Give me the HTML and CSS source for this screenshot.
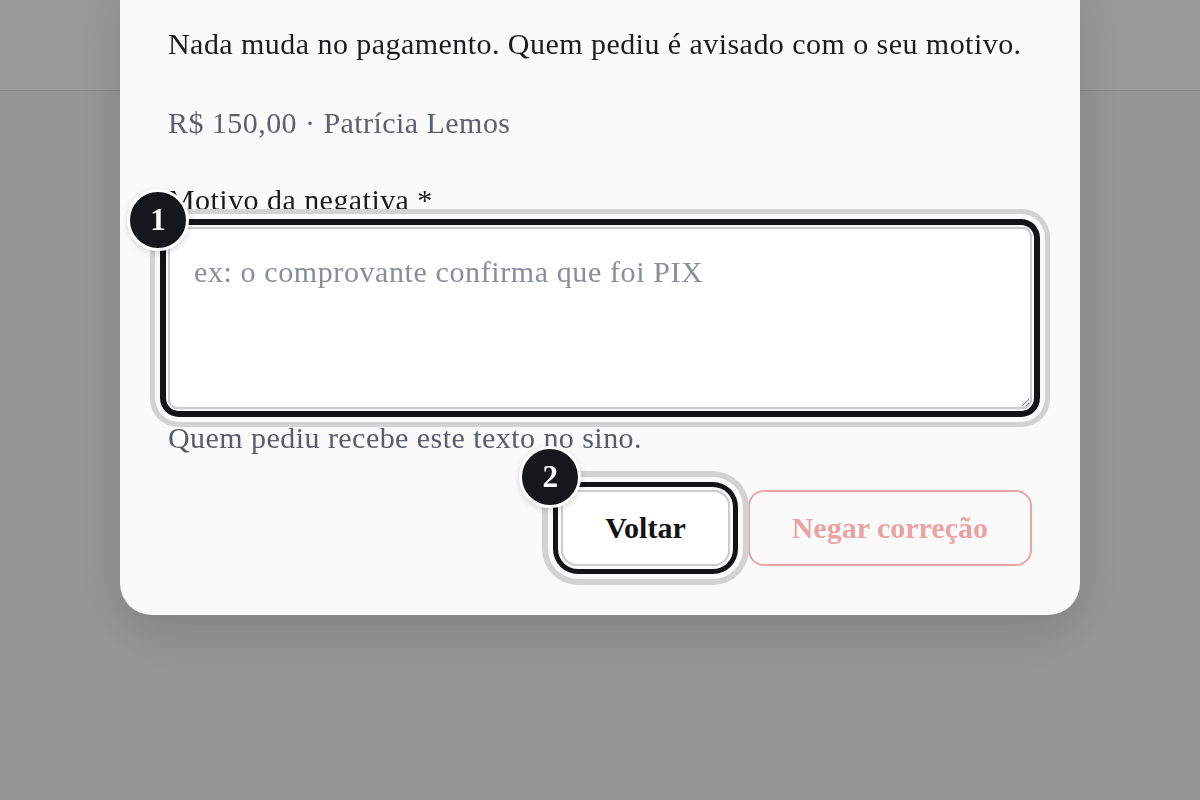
FILE: index.html
```html
<!DOCTYPE html>
<html lang="pt-BR">
<head>
<meta charset="utf-8">
<title>Negar correção</title>
<link rel="stylesheet" href="styles.css">
</head>
<body>
<header class="topbar"></header>
<main class="page"></main>
<div class="overlay">
  <section class="modal" role="dialog" aria-label="Negar correção">
    <p class="lead">Nada muda no pagamento. Quem pediu é avisado com o seu motivo.</p>
    <p class="meta">R$ 150,00 · Patrícia Lemos</p>
    <div class="field">
      <label class="label" for="motivo">Motivo da negativa *</label>
      <div class="hl hl-area">
        <textarea id="motivo" class="area" placeholder="ex: o comprovante confirma que foi PIX"></textarea>
        <span class="badge badge-1">1</span>
      </div>
      <p class="hint">Quem pediu recebe este texto no sino.</p>
    </div>
    <div class="actions">
      <div class="hl hl-btn">
        <button class="btn btn-back">Voltar</button>
        <span class="badge badge-2">2</span>
      </div>
      <button class="btn btn-deny" disabled>Negar correção</button>
    </div>
  </section>
</div>
</body>
</html>
```
FILE: styles.css
```css
* { box-sizing: border-box; }
html, body { margin: 0; height: 100%; }
body {
  font-family: "Liberation Serif", "DejaVu Serif", serif;
  background: #fafafa;
  overflow: hidden;
}
.topbar {
  height: 91px;
  background: #ffffff;
  border-bottom: 1px solid #e6e6e6;
}
.page { height: 709px; }
.overlay {
  position: fixed;
  inset: 0;
  background: rgba(0, 0, 0, 0.4);
  display: flex;
  justify-content: center;
  align-items: flex-start;
}
.modal {
  width: 960px;
  margin-top: -40px;
  padding: 63px 48px 49px;
  background: #fafafa;
  border-radius: 32px;
  box-shadow: 0 18px 50px rgba(0, 0, 0, 0.14);
  font-size: 30px;
  line-height: 42px;
  letter-spacing: 0.45px;
}
.lead { margin: 0; color: #1b1b1d; }
.meta { margin: 37px 0 0; color: #5d5f6c; }
.field { margin-top: 35px; }
.label { display: block; color: #1b1b1d; }
.hl { position: relative; }
.hl-area {
  margin-top: 6px;
  border-radius: 11px;
  box-shadow: 0 0 0 2px #fafafa, 0 0 0 8px #141416, 0 0 0 13px #fafafa, 0 0 0 18px #d2d2d2;
}
.area {
  display: block;
  width: 100%;
  height: 182px;
  margin: 0;
  padding: 22px 24px;
  border: 2px solid #cbcbcf;
  border-radius: 10px;
  background: #ffffff;
  font: inherit;
  letter-spacing: 0.6px;
  color: #1b1b1d;
  resize: vertical;
  outline: none;
}
.area::placeholder { color: #8a8d9a; }
.hint { margin: 8px 0 0; color: #5a5c68; }
.actions {
  margin-top: 31px;
  display: flex;
  justify-content: flex-end;
  gap: 18px;
}
.hl-btn {
  border-radius: 17px;
  box-shadow: 0 0 0 3px #fafafa, 0 0 0 8px #141416, 0 0 0 13px #fafafa, 0 0 0 19px #d2d2d2;
}
.btn {
  display: block;
  height: 76px;
  padding: 0 42px;
  border-radius: 16px;
  font: inherit;
  letter-spacing: 0;
  font-weight: 700;
  background: #ffffff;
  cursor: pointer;
}
.btn-back {
  border: 2px solid #cccccc;
  color: #141416;
}
.btn-deny {
  border: 2px solid #eaa6a6;
  color: #eba2a2;
  background: transparent;
  cursor: default;
}
.badge {
  position: absolute;
  width: 62px;
  height: 62px;
  border-radius: 50%;
  background: #16171a;
  border: 3px solid #ffffff;
  color: #ffffff;
  font-weight: 700;
  font-size: 31px;
  line-height: 56px;
  letter-spacing: 0;
  text-align: center;
  box-shadow: 0 2px 6px rgba(0, 0, 0, 0.15);
}
.badge-1 { left: -41px; top: -38px; }
.badge-2 { left: -42px; top: -44px; }
```
